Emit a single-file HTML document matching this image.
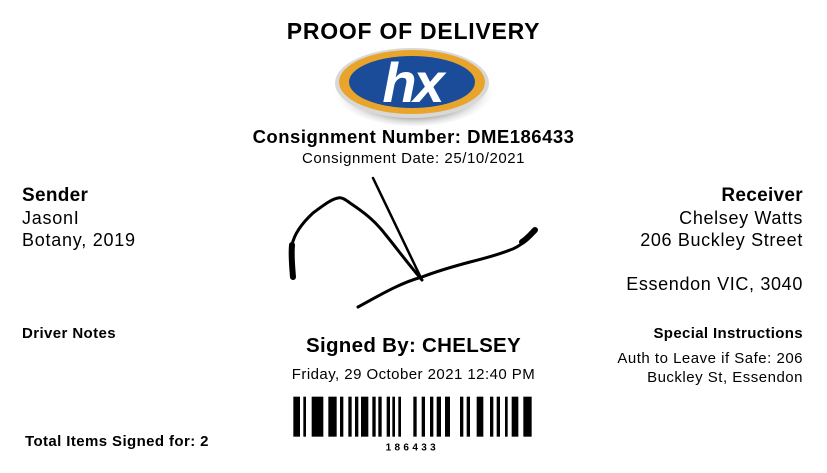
<!DOCTYPE html>
<html><head><meta charset="utf-8"><style>
body{margin:0;width:827px;height:473px;background:#fff;font-family:"Liberation Sans",Arial,sans-serif;color:#000;position:relative;overflow:hidden}
.a{position:absolute;white-space:nowrap}
.c{left:0;width:827px;text-align:center}
.r{text-align:right}
</style></head><body>
<div class="a c" style="top:18px;font-size:23px;font-weight:bold;letter-spacing:0.75px">PROOF OF DELIVERY</div>
<svg class="a" style="left:328px;top:42px" width="170" height="84" viewBox="0 0 170 84">
<defs><radialGradient id="sh" cx="50%" cy="55%" r="50%"><stop offset="0.7" stop-color="#888" stop-opacity=".6"/><stop offset="1" stop-color="#fff" stop-opacity="0"/></radialGradient></defs>
<ellipse cx="86" cy="46" rx="82" ry="38" fill="url(#sh)"/>
<ellipse cx="84" cy="41" rx="77" ry="35" fill="#d8d8d8"/>
<ellipse cx="84" cy="40" rx="73" ry="32" fill="#e9a52b"/>
<ellipse cx="84" cy="40" rx="63" ry="26" fill="#1a4c9a"/>
<text x="84" y="60" font-family="Liberation Sans" font-weight="bold" font-style="italic" font-size="56" fill="#fff" text-anchor="middle" letter-spacing="-3">hx</text>
</svg>
<div class="a c" style="top:126px;font-size:18.5px;font-weight:bold;letter-spacing:0.5px">Consignment Number: DME186433</div>
<div class="a c" style="top:150px;font-size:15px;letter-spacing:0.55px">Consignment Date: 25/10/2021</div>
<div class="a" style="left:22px;top:185px;font-size:19px;font-weight:bold;letter-spacing:0.3px">Sender</div>
<div class="a" style="left:22px;top:207px;font-size:18px;line-height:22px;letter-spacing:0.75px">JasonI<br>Botany, 2019</div>
<div class="a r" style="right:24px;top:185px;font-size:19px;font-weight:bold;letter-spacing:0.3px">Receiver</div>
<div class="a r" style="right:24px;top:207px;font-size:18px;line-height:22px;letter-spacing:0.65px">Chelsey Watts<br>206 Buckley Street<br><br>Essendon VIC, 3040</div>
<svg class="a" style="left:0;top:0" width="827" height="473" fill="none" stroke="#000" stroke-linecap="round" stroke-linejoin="round">
<path d="M293,277 C291,265 290,250 292,245 C294,235 300,225 313,213 C325,204 332,199 338,198 C342,197 346,200 350,203 C365,213 375,221 385,234 C395,246 405,260 422,280" stroke-width="3"/>
<path d="M293,277 C292,265 291,255 292,245" stroke-width="6"/>
<path d="M373,178 L422,280" stroke-width="2.5"/>
<path d="M358,307 C380,295 400,283 422,277 C440,270 455,266 470,262 C490,257 500,254 510,250 C522,246 528,238 535,230" stroke-width="3"/>
<path d="M522,242 C528,238 531,234 535,230" stroke-width="6"/>
</svg>
<div class="a" style="left:22px;top:325px;font-size:15px;font-weight:bold;letter-spacing:0.4px">Driver Notes</div>
<div class="a c" style="top:334px;font-size:20.5px;font-weight:bold;letter-spacing:0.3px">Signed By: CHELSEY</div>
<div class="a c" style="top:366px;font-size:15px;letter-spacing:0.45px">Friday, 29 October 2021 12:40 PM</div>
<div class="a r" style="right:24px;top:325px;font-size:15px;font-weight:bold;letter-spacing:0.35px">Special Instructions</div>
<div class="a r" style="right:24px;top:349px;font-size:15px;line-height:19px;letter-spacing:0.5px">Auth to Leave if Safe: 206<br>Buckley St, Essendon</div>
<div class="a" style="left:25px;top:433px;font-size:15px;font-weight:bold;letter-spacing:0.4px">Total Items Signed for: 2</div>
<svg class="a" style="left:285px;top:390px" width="260" height="70" viewBox="0 0 780 210">
<g fill="#000">
<rect x="25" y="20" width="20" height="120"/><rect x="55" y="20" width="8" height="120"/><rect x="80" y="20" width="35" height="120"/><rect x="130" y="20" width="25" height="120"/><rect x="165" y="20" width="10" height="120"/><rect x="190" y="20" width="10" height="120"/><rect x="210" y="20" width="10" height="120"/><rect x="228" y="20" width="22" height="120"/><rect x="262" y="20" width="10" height="120"/><rect x="280" y="20" width="10" height="120"/><rect x="305" y="20" width="10" height="120"/><rect x="322" y="20" width="8" height="120"/><rect x="340" y="20" width="8" height="120"/><rect x="385" y="20" width="10" height="120"/><rect x="410" y="20" width="10" height="120"/><rect x="435" y="20" width="10" height="120"/><rect x="455" y="20" width="13" height="120"/><rect x="480" y="20" width="15" height="120"/><rect x="525" y="20" width="10" height="120"/><rect x="545" y="20" width="10" height="120"/><rect x="575" y="20" width="20" height="120"/><rect x="615" y="20" width="10" height="120"/><rect x="635" y="20" width="10" height="120"/><rect x="660" y="20" width="8" height="120"/><rect x="680" y="20" width="20" height="120"/><rect x="715" y="20" width="25" height="120"/>
</g>
<text x="382" y="182" font-family="Liberation Sans" font-size="30" font-weight="bold" text-anchor="middle" letter-spacing="10">186433</text>
</svg>
</body></html>
